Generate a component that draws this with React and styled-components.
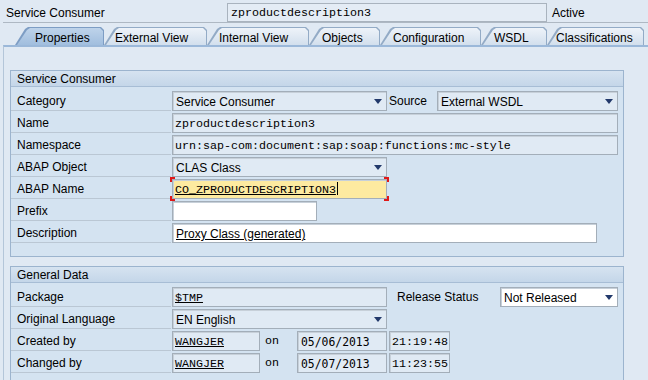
import React from 'react';
import styled, { createGlobalStyle, css } from 'styled-components';

const GlobalStyle = createGlobalStyle`
  html, body { margin: 0; padding: 0; background: #e0e9f3; }
  body { font-family: "Liberation Sans", Arial, sans-serif; font-size: 12px; color: #000; }
  * { box-sizing: border-box; }
`;

const Screen = styled.div`
  width: 648px;
  height: 380px;
  overflow: hidden;
  background: #e0e9f3;
  display: flex;
  flex-direction: column;
`;

const TitleBar = styled.div`
  height: 23px;
  margin-left: 3px;
  padding: 3px 0 0 3px;
  border-bottom: 1px solid #aeb8c3;
  display: flex;
  align-items: flex-start;
  flex: none;
`;

const TitleLabel = styled.div`
  width: 221px;
  line-height: 21px;
`;

const TitleInput = styled.div`
  width: 320px;
  height: 19px;
  border: 1px solid #a9b3be;
  background: #e4ecf5;
  padding-left: 3px;
  line-height: 19px;
  font-family: "Liberation Mono", "Courier New", monospace;
  font-size: 11.67px;
`;

const Status = styled.div`
  margin-left: 5px;
  line-height: 21px;
`;

const TabStrip = styled.div`
  margin-top: 4px;
  height: 18px;
  padding-left: 15px;
  display: flex;
  flex: none;
`;

const tabShape = css`
  clip-path: polygon(0 100%, 10px 2px, 13px 0, calc(100% - 3px) 0, 100% 3px, 100% 100%);
`;

const Tab = styled.div`
  position: relative;
  flex: none;
  width: ${p => p.$w}px;
  height: 18px;
  padding-left: ${p => p.$pl}px;
  display: flex;
  align-items: center;
  background: ${p => (p.$active ? '#7d9dc4' : '#93abc6')};
  ${tabShape}
  &::before {
    content: '';
    position: absolute;
    top: 1px;
    left: 2px;
    right: 1px;
    bottom: 0;
    background: ${p =>
      p.$active
        ? 'linear-gradient(#bed3ea, #a1bede)'
        : 'linear-gradient(#eef3f9, #d2dfed)'};
    ${tabShape}
  }
`;

const TabText = styled.span`
  position: relative;
  line-height: 16px;
  padding-top: 3px;
`;

const Panel = styled.div`
  flex: 1;
  margin-left: 3px;
  border-left: 1px solid #b4c6d9;
  border-top: 2px solid #9bb8d9;
  padding: 23px 0 0 6px;
  display: flex;
  flex-direction: column;
  gap: 9px;
`;

const Group = styled.div`
  width: 614px;
  flex: none;
  border: 1px solid #9cb4ce;
  background: #d4e3f1;
`;

const GroupHeader = styled.div`
  height: 16px;
  border-bottom: 1px solid #a7bdd5;
  background: linear-gradient(#d6e3f0, #c4d6e9);
  padding-left: 6px;
  line-height: 16px;
`;

const GroupBody = styled.div`
  padding: 4px 0 13px 0;
  display: flex;
  flex-direction: column;
  gap: 2px;
`;

const Row = styled.div`
  display: flex;
  align-items: flex-start;
  height: 20px;
`;

const RowLabel = styled.div`
  flex: none;
  width: 160px;
  height: 20px;
  border-bottom: 1px solid #bac7d4;
  padding-left: 6px;
  line-height: 21px;
  margin-right: 1px;
`;

const bgFor = v => (v === 'white' ? '#ffffff' : v === 'yellow' ? '#fdeaa0' : '#e0eaf4');

const Field = styled.div`
  position: relative;
  flex: none;
  width: ${p => p.$w}px;
  height: 20px;
  border: 1px solid #a3aeb9;
  box-shadow: inset 1px 1px 0 #c7d0d9;
  background: ${p => bgFor(p.$variant)};
  padding: 0 3px;
  line-height: 20px;
  white-space: nowrap;
  overflow: hidden;
  ${p =>
    p.$mono &&
    css`
      font-family: "Liberation Mono", "Courier New", monospace;
      font-size: 11.67px;
      padding-left: 2px;
    `}
  ${p =>
    p.$digits &&
    css`
      font-family: "DejaVu Sans Mono", monospace;
      font-size: 11.4px;
      padding-left: 3px;
    `}
`;

const Dropdown = styled(Field)`
  padding-right: 16px;
  &::after {
    content: '';
    position: absolute;
    right: 4px;
    top: 7px;
    border-left: 4px solid transparent;
    border-right: 4px solid transparent;
    border-top: 5px solid #22396b;
  }
`;

const Under = styled.span`
  text-decoration: underline;
  text-underline-offset: 1px;
`;

const Cursor = styled.span`
  display: inline-block;
  width: 1px;
  height: 13px;
  background: #000;
  vertical-align: -2px;
  margin-left: 1px;
`;

const InlineLabel = styled.div`
  flex: none;
  width: ${p => p.$w}px;
  margin-left: ${p => p.$ml || 0}px;
  line-height: 21px;
  ${p =>
    p.$mono &&
    css`
      font-family: "Liberation Mono", "Courier New", monospace;
      font-size: 11.67px;
    `}
`;

const Gap = styled.div`
  flex: none;
  width: ${p => p.$w}px;
`;

const FocusWrap = styled.div`
  position: relative;
  flex: none;
`;

const Corner = styled.span`
  position: absolute;
  width: 5px;
  height: 5px;
  border-color: #e01818;
  border-style: solid;
  border-width: 0;
  ${p => (p.$v === 't' ? 'top: -2px;' : 'bottom: -2px;')}
  ${p => (p.$h === 'l' ? 'left: -2px;' : 'right: -2px;')}
  ${p => (p.$v === 't' ? 'border-top-width: 2px;' : 'border-bottom-width: 2px;')}
  ${p => (p.$h === 'l' ? 'border-left-width: 2px;' : 'border-right-width: 2px;')}
`;

const tabs = [
  { label: 'Properties', w: 89, pl: 20, active: true },
  { label: 'External View', w: 103, pl: 11 },
  { label: 'Internal View', w: 102, pl: 12 },
  { label: 'Objects', w: 71, pl: 13 },
  { label: 'Configuration', w: 101, pl: 13 },
  { label: 'WSDL', w: 66, pl: 13 },
  { label: 'Classifications', w: 97, pl: 9 },
];

export default function App() {
  return (
    <Screen>
      <GlobalStyle />
      <TitleBar>
        <TitleLabel>Service Consumer</TitleLabel>
        <TitleInput>zproductdescription3</TitleInput>
        <Status>Active</Status>
      </TitleBar>

      <TabStrip>
        {tabs.map(t => (
          <Tab key={t.label} $w={t.w} $pl={t.pl} $active={t.active}>
            <TabText>{t.label}</TabText>
          </Tab>
        ))}
      </TabStrip>

      <Panel>
        <Group>
          <GroupHeader>Service Consumer</GroupHeader>
          <GroupBody>
            <Row>
              <RowLabel>Category</RowLabel>
              <Dropdown $w={215}>Service Consumer</Dropdown>
              <InlineLabel $w={48} $ml={2}>Source</InlineLabel>
              <Dropdown $w={181}>External WSDL</Dropdown>
            </Row>
            <Row>
              <RowLabel>Name</RowLabel>
              <Field $w={446} $mono>zproductdescription3</Field>
            </Row>
            <Row>
              <RowLabel>Namespace</RowLabel>
              <Field $w={446} $mono>urn:sap-com:document:sap:soap:functions:mc-style</Field>
            </Row>
            <Row>
              <RowLabel>ABAP Object</RowLabel>
              <Dropdown $w={215}>CLAS Class</Dropdown>
            </Row>
            <Row>
              <RowLabel>ABAP Name</RowLabel>
              <FocusWrap>
                <Field $w={215} $mono $variant="yellow">
                  <Under>CO_ZPRODUCTDESCRIPTION3</Under>
                  <Cursor />
                </Field>
                <Corner $v="t" $h="l" />
                <Corner $v="t" $h="r" />
                <Corner $v="b" $h="l" />
                <Corner $v="b" $h="r" />
              </FocusWrap>
            </Row>
            <Row>
              <RowLabel>Prefix</RowLabel>
              <Field $w={145} $variant="white" />
            </Row>
            <Row>
              <RowLabel>Description</RowLabel>
              <Field $w={425} $variant="white">
                <Under>Proxy Class (generated)</Under>
              </Field>
            </Row>
          </GroupBody>
        </Group>

        <Group>
          <GroupHeader>General Data</GroupHeader>
          <GroupBody>
            <Row>
              <RowLabel>Package</RowLabel>
              <Field $w={215} $mono>
                <Under>$TMP</Under>
              </Field>
              <InlineLabel $w={103} $ml={10}>Release Status</InlineLabel>
              <Dropdown $w={118} $variant="white">Not Released</Dropdown>
            </Row>
            <Row>
              <RowLabel>Original Language</RowLabel>
              <Dropdown $w={215}>EN English</Dropdown>
            </Row>
            <Row>
              <RowLabel>Created by</RowLabel>
              <Field $w={88} $mono>
                <Under>WANGJER</Under>
              </Field>
              <InlineLabel $w={32} $ml={5} $mono>on</InlineLabel>
              <Field $w={90} $digits>05/06/2013</Field>
              <Gap $w={2} />
              <Field $w={61} $mono>21:19:48</Field>
            </Row>
            <Row>
              <RowLabel>Changed by</RowLabel>
              <Field $w={88} $mono>
                <Under>WANGJER</Under>
              </Field>
              <InlineLabel $w={32} $ml={5} $mono>on</InlineLabel>
              <Field $w={90} $digits>05/07/2013</Field>
              <Gap $w={2} />
              <Field $w={61} $mono>11:23:55</Field>
            </Row>
          </GroupBody>
        </Group>
      </Panel>
    </Screen>
  );
}
